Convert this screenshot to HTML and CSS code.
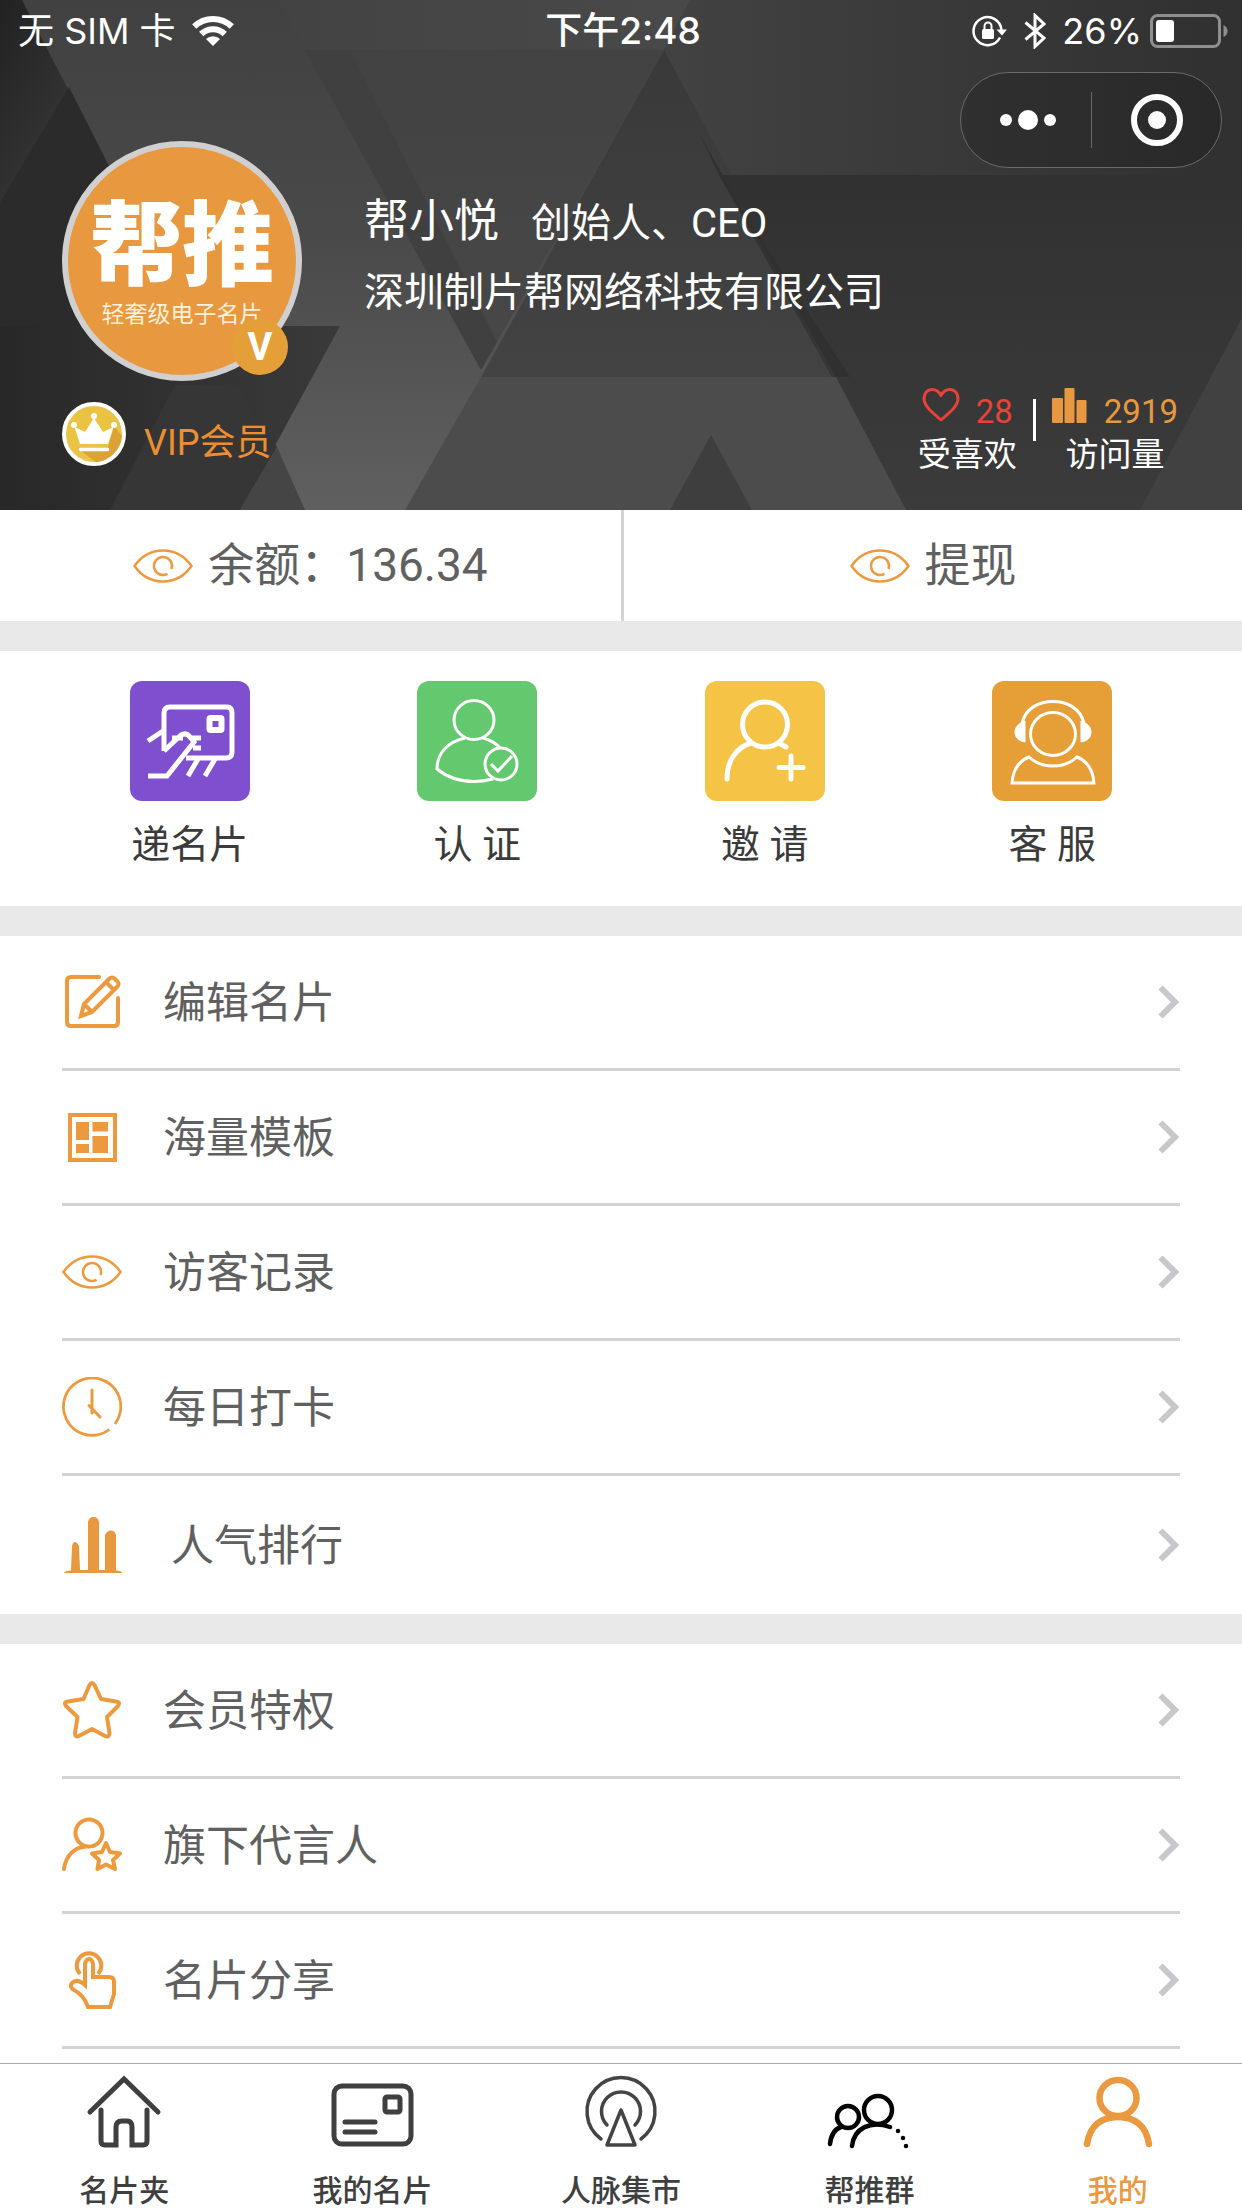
FILE: index.html
```html
<!DOCTYPE html>
<html lang="zh-CN">
<head>
<meta charset="utf-8">
<meta name="viewport" content="width=device-width, initial-scale=1">
<title>我的</title>
<link rel="stylesheet" href="styles.css">
</head>
<body>
<svg class="defs" aria-hidden="true">
  <symbol id="eye" viewBox="0 0 60 60">
    <path d="M1.500 30C10 18 20 14.500 30 14.500S50 18 58.500 30C50 42 40 45.500 30 45.500S10 42 1.500 30Z"/>
    <path d="M38.500 33A9 9 0 1 0 34.500 37.800"/>
  </symbol>
  <symbol id="chevron" viewBox="0 0 22 36">
    <path d="M2.500 3.500L17 18L2.500 32.500"/>
  </symbol>
</svg>

<header class="header">
  <svg class="backdrop" viewBox="0 0 1242 510" preserveAspectRatio="none" aria-hidden="true">
    <defs>
      <linearGradient id="band" x1="0" y1="0" x2="0" y2="1"><stop offset="0" stop-color="#414141"/><stop offset=".45" stop-color="#494949"/><stop offset="1" stop-color="#606060"/></linearGradient>
      <linearGradient id="left" x1="0" y1="0" x2="1" y2="1"><stop offset="0" stop-color="#222"/><stop offset=".35" stop-color="#333"/><stop offset="1" stop-color="#363636"/></linearGradient>
      <linearGradient id="mid" x1="0" y1="0" x2="0" y2="1"><stop offset="0" stop-color="#424242"/><stop offset="1" stop-color="#484848"/></linearGradient>
      <linearGradient id="top" x1="0" y1="0" x2="1" y2="0"><stop offset="0" stop-color="#434343"/><stop offset="1" stop-color="#494949"/></linearGradient>
      <linearGradient id="right" x1="0" y1="0" x2="1" y2="0"><stop offset="0" stop-color="#424242"/><stop offset="1" stop-color="#303030"/></linearGradient>
      <linearGradient id="core" x1="0" y1="0" x2="0" y2="1"><stop offset="0" stop-color="#393939"/><stop offset="1" stop-color="#434343"/></linearGradient>
      <linearGradient id="wedge" x1="0" y1="0" x2="0" y2="1"><stop offset="0" stop-color="#313131"/><stop offset="1" stop-color="#3b3b3b"/></linearGradient>
      <linearGradient id="floor" x1="0" y1="0" x2="1" y2="0"><stop offset="0" stop-color="#282828"/><stop offset="1" stop-color="#3a3a3a"/></linearGradient>
    </defs>
    <rect width="1242" height="510" fill="url(#band)"/>
    <path d="M0 0H22L190 326H0Z" fill="url(#left)"/>
    <path d="M69 87L190 326H0V203Z" fill="#2b2b2b"/>
    <path d="M280 0H690L664 50H305Z" fill="url(#top)"/>
    <path d="M305 50H664L481 370Z" fill="url(#mid)"/>
    <path d="M305 50H350L497 342L481 370Z" fill="#404040"/>
    <path d="M690 0H1242V175H719L664 50Z" fill="url(#right)"/>
    <path d="M664 50L840 377H481Z" fill="url(#core)"/>
    <path d="M719 175H1242V510H906Z" fill="url(#wedge)"/>
    <path d="M719 175L850 377H836L700 135Z" fill="#303030"/>
    <path d="M1242 318V510H1140Z" fill="#414141"/>
    <path d="M481 377H836L906 510H405Z" fill="#4c4c4c"/>
    <path d="M711 435L752 510H670Z" fill="#3e3e3e"/>
    <path d="M0 326H340L240 510H0Z" fill="url(#floor)"/>
    <path d="M175 385H237L277 447L240 510H110Z" fill="#363636"/>
    <path d="M277 447L305 510H240Z" fill="#454545"/>
  </svg>

  <div class="status">
    <div class="status-left">
      <span>无 SIM 卡</span>
      <svg width="42" height="32" viewBox="0 0 42 32" aria-label="Wi-Fi"><g fill="none" stroke="#fff" stroke-width="6"><path d="M2.200 11.500A27 27 0 0 1 39.800 11.500"/><path d="M9.200 19A17 17 0 0 1 32.800 19"/></g><path d="M21 31L14 24A10 10 0 0 1 28 24Z" fill="#fff"/></svg>
    </div>
    <time class="clock">下午2:48</time>
    <div class="status-right">
      <svg width="36" height="32" viewBox="0 0 36 32" fill="none" stroke="#fff" stroke-width="2.500" aria-label="方向锁定"><path d="M28 22.500A14 14 0 1 1 29.500 15"/><path d="M24.500 14.500H35L30 20.500Z" fill="#fff" stroke="none"/><rect x="10" y="14" width="12" height="10" rx="1.500" fill="#fff" stroke="none"/><path d="M12.500 15V11A3.500 3.500 0 0 1 19.500 11V15" stroke-width="2"/></svg>
      <svg width="22" height="36" viewBox="0 0 22 36" fill="none" stroke="#fff" stroke-width="3" aria-label="蓝牙"><path d="M1.500 9.500L20 25L11 33.500V2.500L20 11L1.500 26.500"/></svg>
      <span class="percent">26%</span>
      <svg width="78" height="34" viewBox="0 0 78 34" aria-label="电池"><rect x="1.500" y="1.500" width="68" height="31" rx="6" fill="none" stroke="#8f8f8f" stroke-width="3"/><rect x="6" y="6" width="18" height="22" rx="3" fill="#fff"/><path d="M73.500 11Q77.500 13 77.500 17T73.500 23Z" fill="#8f8f8f"/></svg>
    </div>
  </div>

  <div class="capsule">
    <button type="button" aria-label="更多"><svg width="60" height="56" viewBox="0 0 60 56" fill="#fff"><circle cx="10" cy="28" r="6"/><circle cx="32" cy="28" r="10"/><circle cx="54" cy="28" r="6"/></svg></button>
    <button type="button" aria-label="关闭"><svg width="52" height="56" viewBox="0 0 52 56"><circle cx="26" cy="28" r="23" fill="none" stroke="#fff" stroke-width="6"/><circle cx="26" cy="28" r="9" fill="#fff"/></svg></button>
  </div>

  <div class="profile">
    <div class="avatar">
      <span class="avatar-name">帮推</span>
      <span class="avatar-sub">轻奢级电子名片</span>
      <span class="badge">V</span>
    </div>
    <div class="identity">
      <div class="name-row"><h1>帮小悦</h1><span>创始人、CEO</span></div>
      <div class="company">深圳制片帮网络科技有限公司</div>
    </div>
  </div>

  <div class="meta">
    <div class="vip">
      <svg width="64" height="66" viewBox="0 0 64 66" aria-hidden="true"><circle cx="32" cy="33" r="30" fill="#ebc343" stroke="#fff" stroke-width="4"/><path d="M52 25L60 35A29 29 0 0 1 34 61L19 50H45Z" fill="#dda236"/><path d="M18 43L12.500 26L23 31L32 17L41 31L51.500 26L46 43Z" fill="#fff"/><circle cx="32" cy="15" r="3" fill="#fff"/><circle cx="12" cy="24" r="3" fill="#fff"/><circle cx="52" cy="24" r="3" fill="#fff"/><path d="M18.500 48.500H45.500" stroke="#fff" stroke-width="3.500" stroke-linecap="round"/></svg>
      <span>VIP会员</span>
    </div>
    <div class="stats">
      <div class="stat">
        <div class="stat-top likes"><svg width="38" height="36" viewBox="0 0 38 36" fill="none" stroke="#ea4236" stroke-width="3" stroke-linejoin="round" aria-hidden="true"><path d="M19 33C13 27.500 2 20 2 11.500C2 6 5.500 2.500 10 2.500C14.500 2.500 17.500 5.500 19 8.500C20.500 5.500 23.500 2.500 28 2.500C32.500 2.500 36 6 36 11.500C36 20 25 27.500 19 33Z"/></svg><span>28</span></div>
        <div>受喜欢</div>
      </div>
      <div class="stat-rule"></div>
      <div class="stat">
        <div class="stat-top visits"><svg width="36" height="36" viewBox="0 0 36 36" fill="#e8983e" aria-hidden="true"><rect x="0" y="11" width="11" height="25" rx="1"/><rect x="12.500" y="1" width="10" height="35" rx="1"/><rect x="24.500" y="13" width="10" height="23" rx="1"/></svg><span>2919</span></div>
        <div>访问量</div>
      </div>
    </div>
  </div>
</header>

<main class="main">
  <section class="wallet">
    <a href="#balance"><svg class="icon thin"><use href="#eye"/></svg><span>余额：136.34</span></a>
    <a href="#withdraw"><svg class="icon thin"><use href="#eye"/></svg><span>提现</span></a>
  </section>

  <nav class="quick" aria-label="快捷功能">
    <a href="#send"><svg class="tile purple" viewBox="0 0 120 120" fill="none" stroke="#fff" stroke-width="5"><path d="M34 70V32Q34 26 40 26H97Q102 26 102 32V71Q102 77 96 77H56"/><rect x="79.500" y="37" width="12" height="12" rx="1" stroke-width="6"/><path d="M18 60L33 50M34 70L51 54Q56 51 60 56L64 61L37 95H18M42 57H53M60 57H71M63 67H71M68 78L58 95M85 78L75 95"/></svg><span>递名片</span></a>
    <a href="#verify"><svg class="tile green" viewBox="0 0 120 120" fill="none" stroke="#fff" stroke-width="3"><ellipse cx="57" cy="39" rx="20" ry="19.500"/><path d="M48 57C30 61 20 73 20 88C31 97 45 100.500 57 100.500C65 100.500 70 99.500 76 98M66 57C73 59 79 62 83 67"/><circle cx="84" cy="83" r="16"/><path d="M74 83L81 90L95 75"/></svg><span>认 证</span></a>
    <a href="#invite"><svg class="tile yellow" viewBox="0 0 120 120" fill="none" stroke="#fff" stroke-width="5" stroke-linecap="round"><circle cx="60" cy="43.500" r="22.500"/><path d="M46 62C30 67 22 81 22 98M74 62L81 66M86 75V98M74 86.500H98"/></svg><span>邀 请</span></a>
    <a href="#service"><svg class="tile orange" viewBox="0 0 120 120" fill="none" stroke="#fff" stroke-width="3"><ellipse cx="61" cy="53" rx="22.500" ry="21.500"/><path d="M30 42C34 27 47 20.500 61 20.500S88 27 92 42"/><path d="M33 40V61C26 60 23 56 23 51S27 42 33 40ZM89 40V61C96 60 99 56 99 51S95 42 89 40Z" fill="#fff" stroke-width="1"/><path d="M37 76C50 88 72 88 85 76C95 80 101 89 102 102H20C21 89 27 80 37 76Z"/></svg><span>客 服</span></a>
  </nav>

  <nav class="menu" aria-label="名片管理">
    <a href="#edit"><svg class="icon" viewBox="0 0 60 60"><path d="M37 5H9Q5 5 5 9V50Q5 54 9 54H52Q56 54 56 50V26" stroke-linecap="round"/><path d="M19 44L22 32L47 7Q50 4 53 7L55 9Q58 12 55 15L30 40ZM22 32L30 40M44 10L52 18"/></svg><span>编辑名片</span><svg class="chevron"><use href="#chevron"/></svg></a>
    <a href="#templates"><svg class="icon" viewBox="0 0 60 60"><rect x="8" y="8" width="45" height="45"/><path d="M14 15H27V33H14ZM30.500 15H46V24.500H30.500ZM14 37H27V46H14ZM30.500 29H46V46H30.500Z" fill="#ed993e" stroke="none"/></svg><span>海量模板</span><svg class="chevron"><use href="#chevron"/></svg></a>
    <a href="#visitors"><svg class="icon thin"><use href="#eye"/></svg><span>访客记录</span><svg class="chevron"><use href="#chevron"/></svg></a>
    <a href="#checkin"><svg class="icon thin" viewBox="0 0 60 60"><path d="M53 47A28.700 28.700 0 1 0 47.500 52.500" stroke-width="2.800"/><path d="M30 13V36M27 28.500L38 40" stroke-linecap="round" stroke-width="3"/></svg><span>每日打卡</span><svg class="chevron"><use href="#chevron"/></svg></a>
    <a href="#ranking"><svg class="icon wide" viewBox="0 0 68 60"><path d="M2 58Q3 55.500 9 55.500L10 31Q11 27 13 27T17 31L18 55H26V7Q27 2 31.500 2T37 7V55H43V20Q45 15.500 49 15.500T54 20V55.500Q60 55.500 60 58Z" fill="#e8983e" stroke="none"/></svg><span>人气排行</span><svg class="chevron"><use href="#chevron"/></svg></a>
  </nav>

  <nav class="menu" aria-label="会员服务">
    <a href="#member"><svg class="icon" viewBox="0 0 60 60"><path d="M27.500 5Q30 1 32.500 5L39 19L54 21.500Q59 22 56 26L45 37L47.500 53Q47 58 43 56L30 49L17 56Q13 58 13 53L15.500 37L4 26Q1 22 6 21.500L21.500 19Z" stroke-linejoin="round"/></svg><span>会员特权</span><svg class="chevron"><use href="#chevron"/></svg></a>
    <a href="#ambassador"><svg class="icon" viewBox="0 0 60 60" stroke-linejoin="round"><circle cx="27" cy="18" r="13.500"/><path d="M2 54C4 40 13 32 24 31.500" stroke-linecap="round"/><path d="M44 28L48 37L58 38.500L51 45L53 54L44 49.500L35.500 54L37 45L30 38.500L40 37Z"/></svg><span>旗下代言人</span><svg class="chevron"><use href="#chevron"/></svg></a>
    <a href="#share"><svg class="icon" viewBox="0 0 60 60"><path d="M18 24A12.300 12.300 0 1 1 36 24"/><path d="M23 35V14Q24 9 27 9T31 14V27H47Q52 27 52 32V44L48 57H26C23 48 18 43 12 40Q7 37 10 33Q15 28 23 35Z"/></svg><span>名片分享</span><svg class="chevron"><use href="#chevron"/></svg></a>
  </nav>
</main>

<nav class="tabs" aria-label="主导航">
  <a href="#folder"><svg viewBox="0 0 84 84" fill="none" stroke="#3f3f3f" stroke-width="5" stroke-linecap="round"><path d="M8 42L42 9L76 42"/><path d="M19 40V71Q19 75 23 75H34V57Q34 51 40 51H45Q50 51 50 57V75H61Q65 75 65 71V40"/></svg><span>名片夹</span></a>
  <a href="#mine"><svg viewBox="0 0 84 84" fill="none" stroke="#3f3f3f" stroke-width="5" stroke-linecap="round"><rect x="3" y="16" width="77" height="58" rx="8"/><rect x="54" y="27" width="15" height="15" rx="2"/><path d="M14 52H44M14 62H44"/></svg><span>我的名片</span></a>
  <a href="#market"><svg viewBox="0 0 84 84" fill="none" stroke="#444" stroke-width="3.500" stroke-linecap="round" stroke-linejoin="round"><path d="M22 69A34 34 0 1 1 62 69"/><path d="M28 55A19.500 19.500 0 1 1 56 55"/><path d="M42 40L56 75H28Z"/></svg><span>人脉集市</span></a>
  <a href="#group"><svg viewBox="0 0 84 84" fill="none" stroke="#000" stroke-width="4.500" stroke-linecap="round"><circle cx="21" cy="47" r="11"/><circle cx="51" cy="40" r="14"/><path d="M3 74C4 65 8 59 14 57M25 76C27 58 44 50 63 57"/><path d="M71 61V61.100M76 68V68.100M79 76V76.100"/></svg><span>帮推群</span></a>
  <a class="active" href="#me" aria-current="page"><svg viewBox="0 0 84 84" fill="none" stroke="#ea993f" stroke-width="6.500" stroke-linecap="round"><ellipse cx="42" cy="28" rx="18.500" ry="18"/><path d="M11 74C14 55 26 47 42 47S70 55 73 74"/></svg><span>我的</span></a>
</nav>
</body>
</html>
```
FILE: styles.css
```css
* { box-sizing: border-box; }

body {
  margin: 0;
  min-height: 100vh;
  display: flex;
  flex-direction: column;
  background: #fff;
  color: #606060;
  font-family: Roboto, "Noto Sans CJK SC", sans-serif;
}

a { color: inherit; text-decoration: none; }
svg { display: block; flex: none; }
.defs { position: absolute; width: 0; height: 0; }

/* Header */
.header {
  position: relative;
  isolation: isolate;
  padding-bottom: 34px;
  background: #444;
  color: #fff;
}
.backdrop {
  position: absolute;
  inset: 0;
  z-index: -1;
  width: 100%;
  height: 100%;
}

.status {
  display: grid;
  grid-template-columns: 1fr auto 1fr;
  align-items: center;
  height: 61px;
  padding: 0 14px 0 18px;
  font: 36px/48px Inter, "Noto Sans CJK SC", sans-serif;
}
.status-left, .status-right { display: flex; align-items: center; gap: 16px; }
.status-right { justify-content: flex-end; }
.percent { margin-right: -8px; }
.clock { font-weight: 500; font-size: 37px; }

.capsule {
  position: absolute;
  top: 72px;
  right: 20px;
  display: grid;
  grid-template-columns: 1fr 1fr;
  align-items: center;
  width: 262px;
  height: 96px;
  border: 1px solid #6a6a6a;
  border-radius: 48px;
  background: rgba(0, 0, 0, .15);
}
.capsule button {
  display: flex;
  justify-content: center;
  padding: 0;
  border: 0;
  background: none;
}
.capsule button + button { border-left: 1px solid #6a6a6a; }

.profile { display: flex; gap: 62px; padding: 80px 62px 0; }
.avatar {
  position: relative;
  display: flex;
  flex-direction: column;
  align-items: center;
  flex: none;
  width: 240px;
  height: 240px;
  padding-top: 48px;
  border: 6px solid #d0d0d0;
  border-radius: 50%;
  background: #e8983e;
  white-space: nowrap;
}
.avatar-name { font-size: 92px; font-weight: 900; line-height: 104px; }
.avatar-sub { font-size: 23px; line-height: 32px; color: #fff0dc; }
.badge {
  position: absolute;
  right: 8px;
  bottom: 0;
  width: 56px;
  height: 56px;
  border-radius: 50%;
  background: #e59f38;
  font-size: 38px;
  font-weight: 700;
  line-height: 56px;
  text-align: center;
}
.identity { padding-top: 51px; }
.name-row { display: flex; align-items: baseline; gap: 32px; font-size: 40px; line-height: 60px; }
.name-row h1 { margin: 0; font-size: 45px; font-weight: 400; }
.company { margin-top: 9px; font-size: 40px; line-height: 60px; }

.meta { display: flex; justify-content: space-between; padding: 6px 64px 0 62px; }
.vip {
  display: flex;
  align-items: flex-end;
  align-self: flex-end;
  gap: 18px;
  padding-bottom: 9px;
  font-size: 36px;
  line-height: 48px;
  color: #ed8f30;
}
.stats { display: flex; gap: 16px; font-size: 33px; line-height: 42px; }
.stat { display: flex; flex-direction: column; align-items: center; gap: 4px; }
.stat-top { display: flex; align-items: baseline; gap: 16px; line-height: 36px; }
.likes { color: #ea4236; }
.visits { color: #e8983e; }
.stat-rule { width: 3px; height: 42px; margin-top: 12px; background: #fff; }

/* Balance */
.wallet {
  display: grid;
  grid-template-columns: 1fr 1fr;
  border-bottom: 30px solid #e9e9e9;
  font-size: 46px;
  line-height: 111px;
}
.wallet a { display: flex; align-items: center; justify-content: center; gap: 15px; }
.wallet a + a { border-left: 3px solid #d3d3d3; }

.icon { width: 60px; height: 60px; fill: none; stroke: #ed993e; stroke-width: 4; }
.thin { stroke-width: 2.5px; }
.wide { width: 68px; }

/* Shortcuts */
.quick {
  display: grid;
  grid-template-columns: repeat(4, 1fr);
  padding: 30px 46px 32px;
  border-bottom: 30px solid #e9e9e9;
  color: #3b3b3b;
  font-size: 39px;
  line-height: 57px;
}
.quick a { display: flex; flex-direction: column; align-items: center; gap: 16px; }
.tile { width: 120px; height: 120px; border-radius: 12px; }
.purple { background: #7e4fce; }
.green { background: #64c96e; }
.yellow { background: #f5c446; }
.orange { background: #e69f37; }

/* Menu lists */
.menu { padding: 0 62px; font-size: 43px; line-height: 60px; }
.menu a {
  display: flex;
  align-items: center;
  gap: 41px;
  height: 135px;
  border-bottom: 3px solid #d3d3d3;
}
.menu:has(+ .menu) { border-bottom: 30px solid #e9e9e9; }
.menu:has(+ .menu) a:last-child { height: 138px; border-bottom: 0; }
.menu span { padding-top: 2px; }
.chevron { width: 22px; height: 36px; margin-left: auto; fill: none; stroke: #c7c7cc; stroke-width: 6; }

/* Tab bar */
.main { flex: 1; }
.tabs {
  position: sticky;
  bottom: 0;
  display: grid;
  grid-template-columns: repeat(5, 1fr);
  border-top: 1px solid #ababab;
  padding-top: 6px;
  background: #fff;
  color: #3f3f3f;
  font-size: 30px;
  font-weight: 500;
  line-height: 34px;
}
.tabs a { display: flex; flex-direction: column; align-items: center; gap: 20px; }
.tabs svg { width: 84px; height: 84px; }
.tabs .active { color: #ea993f; }
```
